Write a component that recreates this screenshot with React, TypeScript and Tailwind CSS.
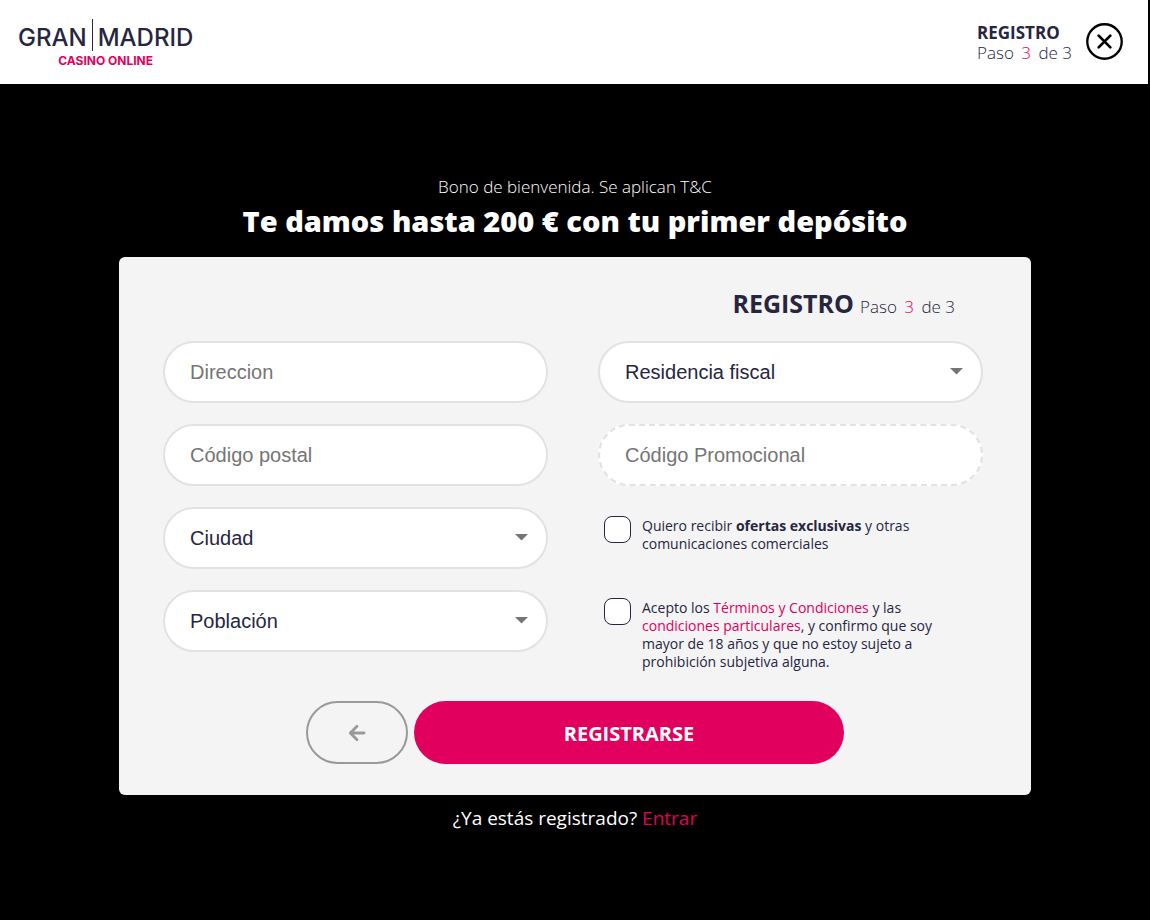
import React from 'react';

const OPEN_SANS = "font-['Open_Sans','Noto_Sans',sans-serif]";
const FIELD =
  "w-full h-[62px] rounded-full border-2 border-[#e2e2e2] bg-white px-[25px] font-['Liberation_Sans',Arial,sans-serif] text-xl text-[#26263f] placeholder:text-[#757575] outline-none focus:border-[#26263f]";

// --- LOGO ---
const Logo = () => (
  <a href="#inicio" aria-label="Gran Madrid Casino Online" className="block pt-2 font-['Inter',sans-serif]">
    <div className="flex h-8 items-center gap-[5px] text-2xl leading-8 font-medium text-[#26263f]">
      <span className="pt-[5px]">GRAN</span>
      <span className="w-px h-8 bg-[#26263f]" />
      <span className="pt-[5px]">MADRID</span>
    </div>
    <div className="text-center text-xs leading-5 font-bold text-[#e1005d]">CASINO ONLINE</div>
  </a>
);

const Step = () => (
  <>
    Paso <span className="mx-[3px] text-[#e1005d]">3</span> de 3
  </>
);

const Header = () => (
  <header className="flex h-[84px] items-center justify-between border-r-2 border-black bg-white pb-0.5 pl-[18px] pr-[25px]">
    <Logo />
    <div className="flex items-center gap-[14px] text-[#26263f]">
      <div className="pt-1 leading-5">
        <p className="text-[17px] leading-5 font-bold">REGISTRO</p>
        <p className="text-[17px] leading-5 font-light">
          <Step />
        </p>
      </div>
      <button type="button" aria-label="Cerrar" className="text-black">
        <svg width="37" height="37" viewBox="0 0 38 38" fill="none" stroke="currentColor">
          <circle cx="19" cy="19" r="17.7" strokeWidth="2.4" />
          <path d="M13 13 L25 25 M25 13 L13 25" strokeWidth="2.8" strokeLinecap="round" />
        </svg>
      </button>
    </div>
  </header>
);

// --- CAMPOS ---
const TextField: React.FC<{ id: string; label: string; dashed?: boolean }> = ({ id, label, dashed }) => (
  <input
    id={id}
    name={id}
    type="text"
    aria-label={label}
    placeholder={label}
    className={`${FIELD} ${dashed ? 'border-dashed' : ''}`}
  />
);

const SelectField: React.FC<{ id: string; label: string }> = ({ id, label }) => (
  <div className="relative">
    <select id={id} name={id} aria-label={label} defaultValue="" className={`${FIELD} appearance-none pb-px`}>
      <option value="">{label}</option>
    </select>
    <svg
      className="pointer-events-none absolute right-5 top-[27px]"
      width="13"
      height="7"
      viewBox="0 0 13 7"
      fill="#757575"
    >
      <path d="M0 0 H13 L6.5 6.5 Z" />
    </svg>
  </div>
);

const CheckField: React.FC<{ id: string; children: React.ReactNode }> = ({ id, children }) => (
  <div className="flex items-start gap-[11px] pl-[6px]">
    <input
      id={id}
      name={id}
      type="checkbox"
      className="size-[27px] shrink-0 appearance-none rounded-lg border border-[#26263f] bg-white checked:bg-[#e1005d]"
    />
    <label htmlFor={id} className="max-w-[304px] pt-px text-sm leading-[18px] text-[#26263f]">
      {children}
    </label>
  </div>
);

const RegisterForm = () => (
  <form className="rounded-md bg-[#f4f4f4] px-11 pt-7 pb-[31px]" onSubmit={(e) => e.preventDefault()}>
    <div className="flex items-baseline justify-end gap-[6px] pr-8 text-[#26263f]">
      <h2 className="text-[25px] leading-9 font-bold">REGISTRO</h2>
      <p className="text-[17px] font-light">
        <Step />
      </p>
    </div>

    <div className="mt-5 grid grid-cols-2 gap-[50px] pr-1">
      <div className="flex flex-col gap-[21px]">
        <TextField id="direccion" label="Direccion" />
        <TextField id="codigo-postal" label="Código postal" />
        <SelectField id="ciudad" label="Ciudad" />
        <SelectField id="poblacion" label="Población" />
      </div>
      <div className="flex flex-col gap-[21px]">
        <SelectField id="residencia" label="Residencia fiscal" />
        <TextField id="codigo-promocional" label="Código Promocional" dashed />
        <div className="mt-[9px] min-h-[61px]">
          <CheckField id="ofertas">
            Quiero recibir <strong className="font-bold">ofertas exclusivas</strong> y otras comunicaciones comerciales
          </CheckField>
        </div>
        <CheckField id="terminos">
          Acepto los <a href="#terminos" className="text-[#e1005d]">Términos y Condiciones</a> y las{' '}
          <a href="#condiciones" className="text-[#e1005d]">condiciones particulares</a>, y confirmo que soy mayor de 18
          años y que no estoy sujeto a prohibición subjetiva alguna.
        </CheckField>
      </div>
    </div>

    <div className="mt-[30px] flex justify-center gap-[6px]">
      <button
        type="button"
        aria-label="Volver"
        className="flex h-[63px] w-[102px] items-center justify-center rounded-full border-2 border-[#999999] text-[#999999]"
      >
        <svg width="18" height="18" viewBox="0 0 18 18" fill="none" stroke="currentColor" strokeWidth="2.8">
          <path d="M2.5 9 H16 M9 2.3 L2.3 9 L9 15.7" strokeLinecap="round" strokeLinejoin="round" />
        </svg>
      </button>
      <button type="submit" className="h-[63px] w-[430px] rounded-full bg-[#e1005d] pt-0.5 text-xl font-bold text-white">
        REGISTRARSE
      </button>
    </div>
  </form>
);

const App: React.FC = () => {
  return (
    <div className={`min-h-screen bg-black ${OPEN_SANS}`}>
      <Header />
      <main className="mx-auto max-w-[912px] pt-[91px] text-white">
        <div className="text-center">
          <p className="text-[17px] leading-6 font-light">Bono de bienvenida. Se aplican T&amp;C</p>
          <h1 className="pt-0.5 text-[29px] leading-10 font-extrabold">Te damos hasta 200 € con tu primer depósito</h1>
        </div>
        <div className="mt-4">
          <RegisterForm />
        </div>
        <p className="mt-[7px] text-center text-[19px] leading-8">
          ¿Ya estás registrado? <a href="#entrar" className="text-[#e1005d]">Entrar</a>
        </p>
      </main>
    </div>
  );
};

export default App;
